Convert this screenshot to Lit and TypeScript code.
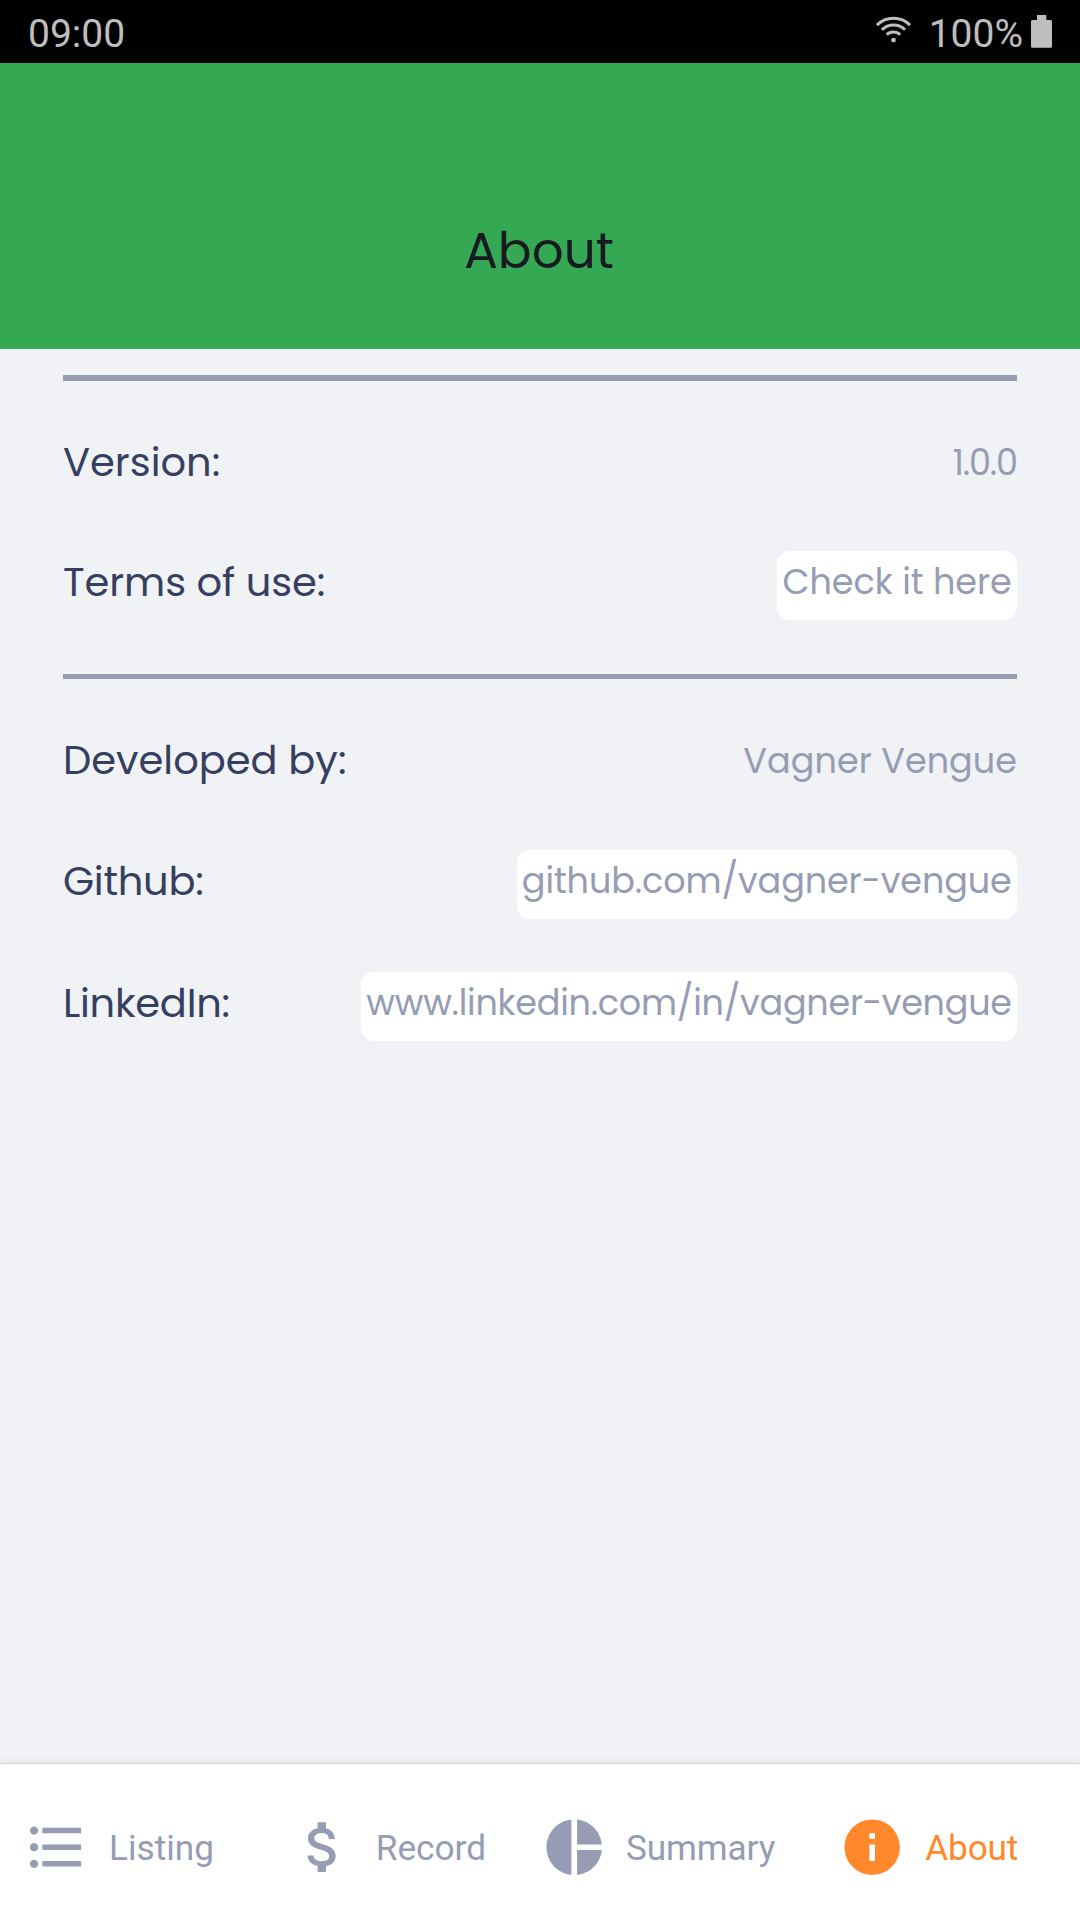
import { LitElement, html, css, svg } from "lit";
import { customElement, property } from "lit/decorators.js";
import { classMap } from "lit/directives/class-map.js";
import { styleMap } from "lit/directives/style-map.js";

interface InfoRow {
  label: string;
  value: string;
  link?: boolean;
  labelTracking?: number;
  valueTracking?: number;
}

interface Tab {
  name: string;
  icon: string;
  width: number;
  gap: number;
  tracking?: number;
  active?: boolean;
}

const APP_ROWS: InfoRow[] = [
  { label: "Version:", value: "1.0.0", valueTracking: -1.1 },
  { label: "Terms of use:", value: "Check it here", link: true, labelTracking: -0.1 },
];

const AUTHOR_ROWS: InfoRow[] = [
  { label: "Developed by:", value: "Vagner Vengue", valueTracking: 0.05 },
  { label: "Github:", value: "github.com/vagner-vengue", link: true, labelTracking: -0.25, valueTracking: -0.09 },
  { label: "LinkedIn:", value: "www.linkedin.com/in/vagner-vengue", link: true, labelTracking: -0.25, valueTracking: -0.25 },
];

const TABS: Tab[] = [
  {
    name: "Listing",
    width: 267,
    gap: 20,
    icon: "M4 10.5c-.83 0-1.5.67-1.5 1.5s.67 1.5 1.5 1.5 1.5-.67 1.5-1.5-.67-1.5-1.5-1.5zm0-6c-.83 0-1.5.67-1.5 1.5S3.17 7.5 4 7.5 5.5 6.83 5.5 6 4.83 4.5 4 4.5zm0 12c-.83 0-1.5.68-1.5 1.5s.68 1.5 1.5 1.5 1.5-.68 1.5-1.5-.67-1.5-1.5-1.5zM7 19h14v-2H7v2zm0-6h14v-2H7v2zm0-8v2h14V5H7z",
  },
  {
    name: "Record",
    width: 251.2,
    gap: 19.8,
    icon: "M11.8 10.9c-2.27-.59-3-1.2-3-2.15 0-1.09 1.01-1.85 2.7-1.85 1.78 0 2.44.85 2.5 2.1h2.21c-.07-1.72-1.12-3.3-3.21-3.81V3h-3v2.16c-1.94.42-3.5 1.68-3.5 3.61 0 2.31 1.91 3.46 4.7 4.13 2.5.6 3 1.48 3 2.41 0 .69-.49 1.79-2.7 1.79-2.06 0-2.87-.92-2.98-2.1h-2.2c.12 2.19 1.76 3.42 3.68 3.83V21h3v-2.15c1.95-.37 3.5-1.5 3.5-3.55 0-2.84-2.43-3.81-4.7-4.4z",
  },
  {
    name: "Summary",
    width: 298,
    gap: 18.8,
    tracking: -0.12,
    icon: "M11 2v20c-5.07-.5-9-4.79-9-10s3.93-9.5 9-10zm2.03 0v8.99H22c-.47-4.74-4.24-8.52-8.97-8.99zm0 11.01V22c4.74-.47 8.5-4.25 8.97-8.99h-8.97z",
  },
  {
    name: "About",
    width: 230,
    gap: 20.2,
    tracking: -0.2,
    active: true,
    icon: "M12 2C6.48 2 2 6.48 2 12s4.48 10 10 10 10-4.48 10-10S17.52 2 12 2zm1 15h-2v-6h2v6zm0-8h-2V7h2v2z",
  },
];

const tracking = (px?: number) => styleMap({ letterSpacing: px ? `${px}px` : null });

@customElement("status-bar")
class StatusBar extends LitElement {
  static styles = css`
    :host {
      display: flex;
      align-items: center;
      box-sizing: border-box;
      height: 63px;
      padding: 4px 28px 0;
      background: #000;
      color: #bebebe;
      font: 39px/46px Roboto, sans-serif;
    }
    .level {
      margin-left: 17px;
    }
    .wifi {
      margin: -10px 0 0 auto;
    }
    .battery {
      margin: -4px 0 0 8px;
    }
    svg {
      display: block;
      fill: currentColor;
    }
    .arc {
      fill: none;
      stroke: currentColor;
      stroke-width: 3;
    }
  `;

  render() {
    return html`
      <span>09:00</span>
      <svg class="wifi" width="37" height="28" viewBox="0 0 37 28">
        ${svg`
          <path class="arc" d="M1.9 10.1A23.4 23.4 0 0 1 35.1 10.1" />
          <path class="arc" d="M6.9 14.8A16.6 16.6 0 0 1 30.1 14.8" />
          <path class="arc" d="M11.7 19.6A9.9 9.9 0 0 1 25.3 19.6" />
          <circle cx="18.5" cy="25.1" r="2.4" />
        `}
      </svg>
      <span class="level">100%</span>
      <svg class="battery" width="21" height="33" viewBox="0 0 21 33">
        <path d="M6 0h9.3v5H19.5A1.5 1.5 0 0 1 21 6.5V31.3A1.5 1.5 0 0 1 19.5 32.8H1.5A1.5 1.5 0 0 1 0 31.3V6.5A1.5 1.5 0 0 1 1.5 5H6z" />
      </svg>
    `;
  }
}

@customElement("info-section")
class InfoSection extends LitElement {
  @property({ attribute: false }) rows: InfoRow[] = [];

  static styles = css`
    :host {
      display: grid;
    }
    .row {
      display: flex;
      justify-content: space-between;
      height: 69px;
      line-height: 63px;
      white-space: nowrap;
    }
    .label {
      color: #363f5f;
      font-size: 40px;
    }
    .value {
      color: #969cb3;
      font-size: 35px;
    }
    .link {
      padding: 0 5.25px;
      border-radius: 13px;
      background: #fff;
      line-height: 61px;
      text-decoration: none;
    }
  `;

  render() {
    return this.rows.map(
      (r) => html`
        <div class="row">
          <span class="label" style=${tracking(r.labelTracking)}>${r.label}</span>
          ${r.link
            ? html`<a class="value link" style=${tracking(r.valueTracking)}>${r.value}</a>`
            : html`<span class="value" style=${tracking(r.valueTracking)}>${r.value}</span>`}
        </div>
      `,
    );
  }
}

@customElement("tab-bar")
class TabBar extends LitElement {
  static styles = css`
    :host {
      display: flex;
      align-items: center;
      box-sizing: border-box;
      height: 157px;
      padding: 10px 0 0 22.6px;
      border-top: 1px solid #d5d6da;
      background: #fff;
      box-shadow: 0 0 10px rgba(0, 0, 0, 0.07);
      font: 35.2px/42px Roboto, sans-serif;
    }
    .tab {
      display: flex;
      align-items: center;
      flex: none;
      color: #969cb3;
    }
    .name {
      padding-top: 2px;
    }
    .active {
      color: #ff872c;
    }
    .icon {
      width: 66.4px;
      height: 66.4px;
      fill: currentColor;
    }
  `;

  render() {
    return TABS.map(
      (t) => html`
        <div
          class=${classMap({ tab: true, active: !!t.active })}
          style=${styleMap({ width: `${t.width}px`, gap: `${t.gap}px` })}
        >
          <svg class="icon" viewBox="0 0 24 24"><path d=${t.icon} /></svg>
          <span class="name" style=${tracking(t.tracking)}>${t.name}</span>
        </div>
      `,
    );
  }
}

@customElement("app-root")
class AppRoot extends LitElement {
  static styles = css`
    :host {
      display: flex;
      flex-direction: column;
      height: 100vh;
      overflow: hidden;
      background: #f0f2f5;
      font-family: Poppins, Inter, sans-serif;
    }
    .header {
      box-sizing: border-box;
      flex: none;
      height: 286px;
      padding: 150px 2px 0 0;
      background: #35a853;
      color: #171a20;
      font-size: 50px;
      line-height: 75px;
      text-align: center;
    }
    .content {
      flex: 1;
      padding: 26px 63px 0;
    }
    .rule {
      height: 6px;
      background: #969cb3;
    }
    .rule.thin {
      height: 5px;
      margin-top: 54px;
    }
    .app {
      padding-top: 50px;
      row-gap: 51px;
    }
    .author {
      padding-top: 50px;
      row-gap: 52.4px;
    }
  `;

  render() {
    return html`
      <status-bar></status-bar>
      <div class="header">About</div>
      <div class="content">
        <div class="rule"></div>
        <info-section class="app" .rows=${APP_ROWS}></info-section>
        <div class="rule thin"></div>
        <info-section class="author" .rows=${AUTHOR_ROWS}></info-section>
      </div>
      <tab-bar></tab-bar>
    `;
  }
}
